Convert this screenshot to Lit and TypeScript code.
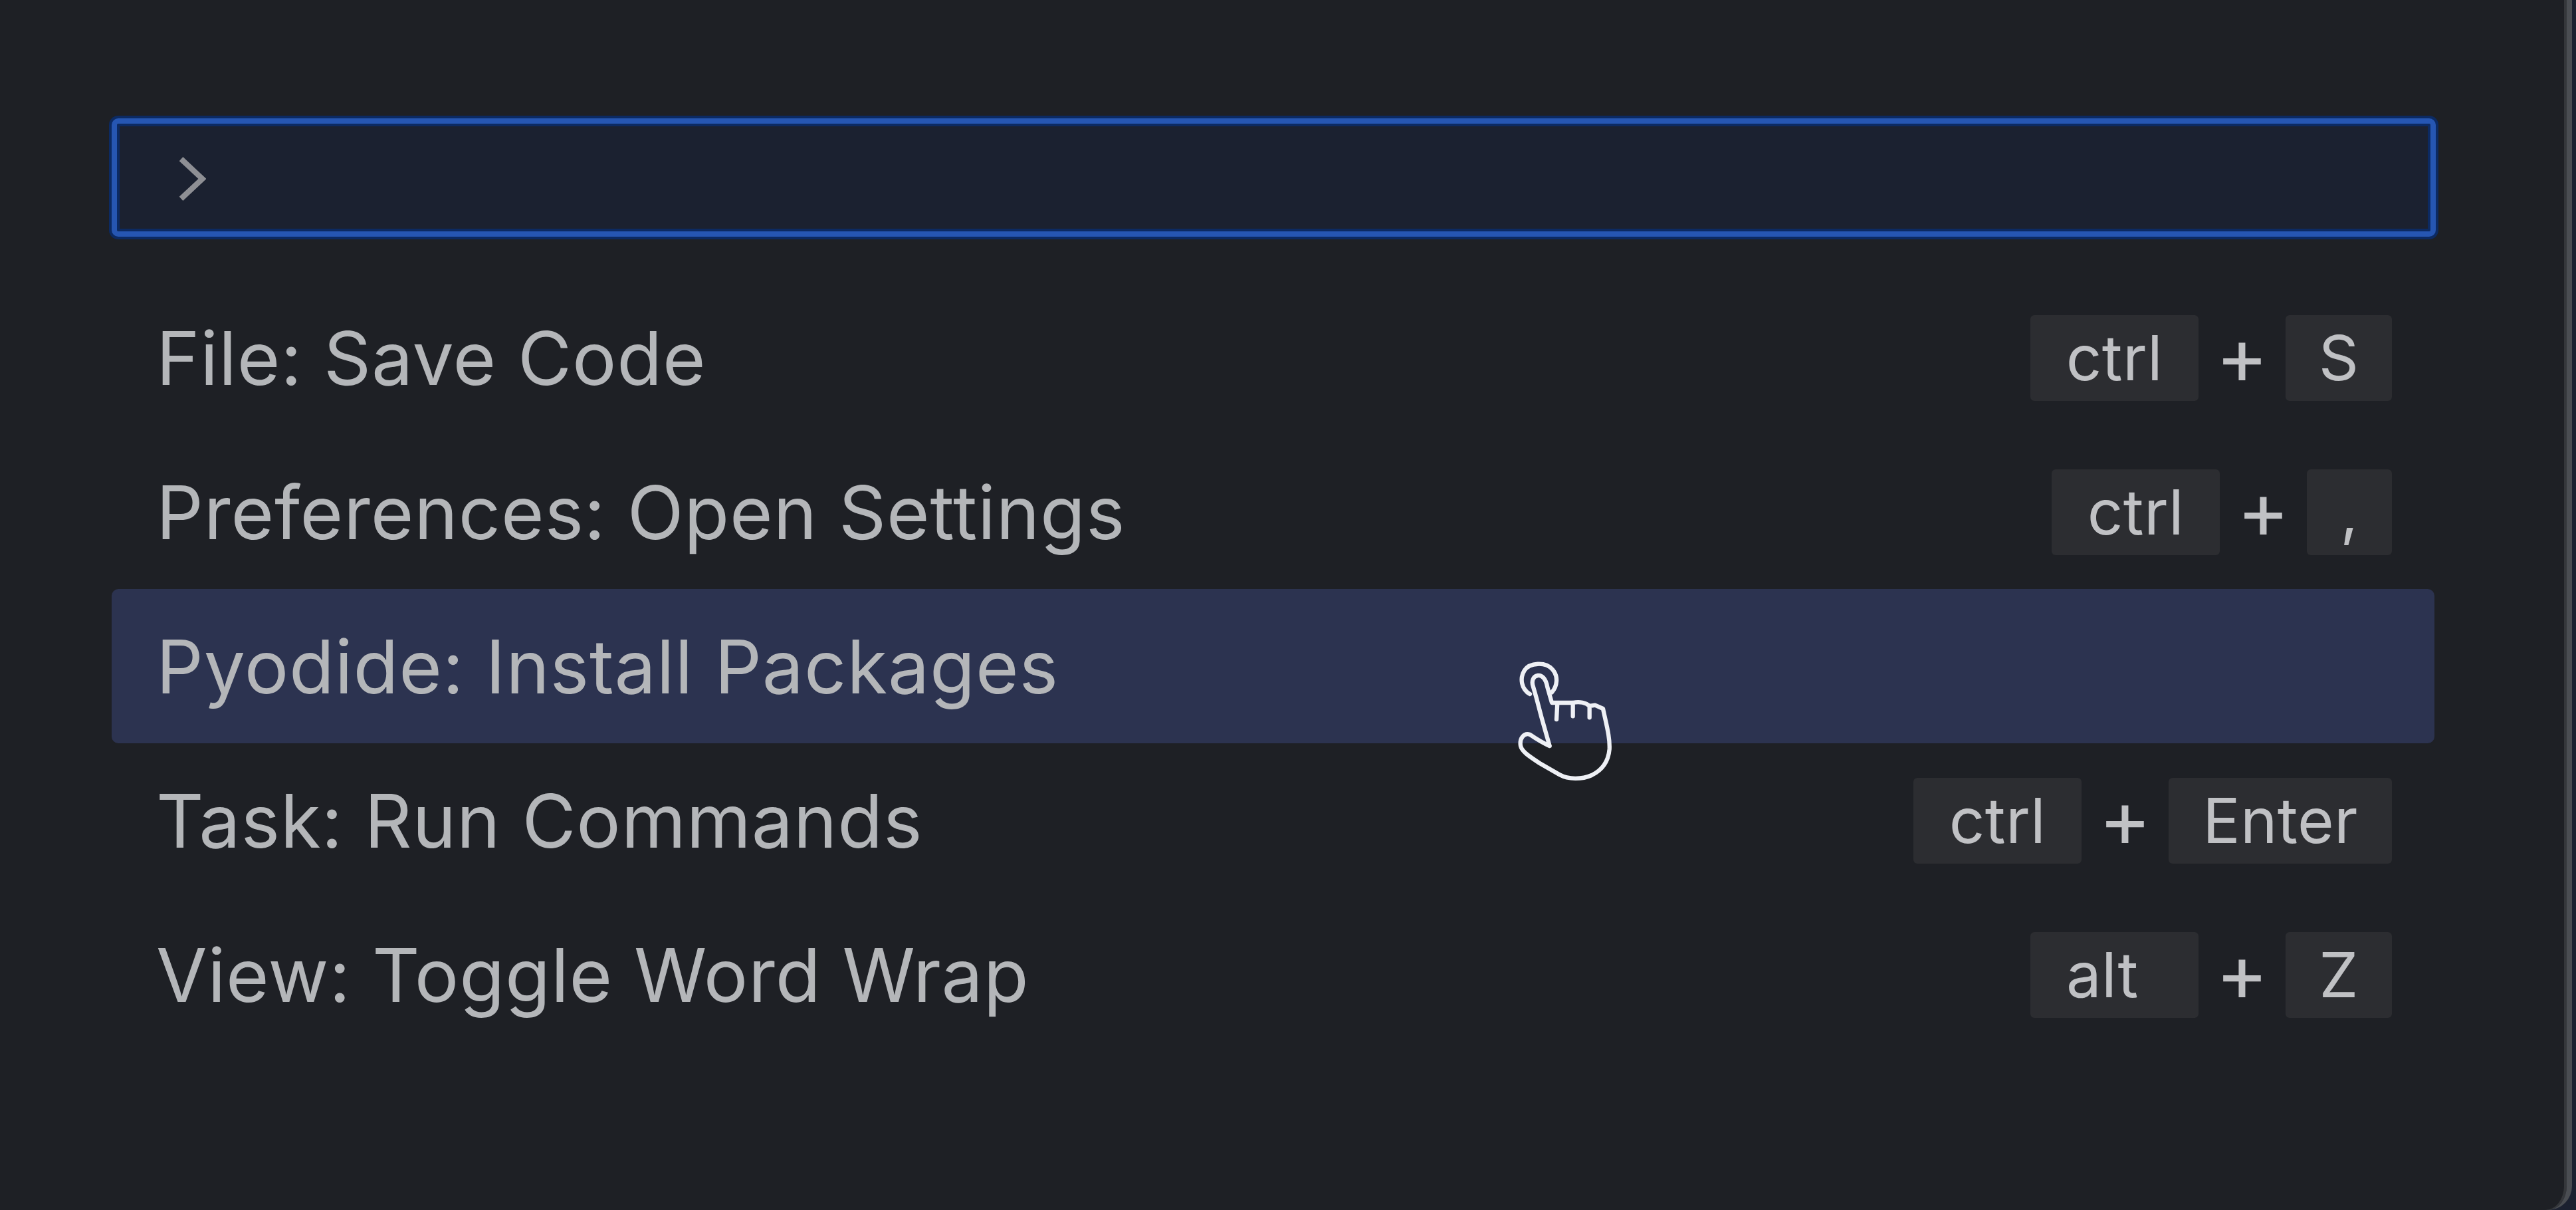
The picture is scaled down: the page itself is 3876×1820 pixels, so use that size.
import { LitElement, css, html, nothing } from "lit";
import { customElement } from "lit/decorators.js";

type Key = {
  text: string;
  width: number;
  start?: boolean;
};

type Command = {
  label: string;
  keys?: [Key, Key];
  active?: boolean;
};

const COMMANDS: Command[] = [
  {
    label: "File: Save Code",
    keys: [
      { text: "ctrl", width: 253 },
      { text: "S", width: 160 }
    ]
  },
  {
    label: "Preferences: Open Settings",
    keys: [
      { text: "ctrl", width: 253 },
      { text: ",", width: 128 }
    ]
  },
  { label: "Pyodide: Install Packages", active: true },
  {
    label: "Task: Run Commands",
    keys: [
      { text: "ctrl", width: 253 },
      { text: "Enter", width: 336 }
    ]
  },
  {
    label: "View: Toggle Word Wrap",
    keys: [
      { text: "alt", width: 253, start: true },
      { text: "Z", width: 160 }
    ]
  }
];

@customElement("app-root")
export class AppRoot extends LitElement {
  protected render() {
    return html`
      <div class="panel">
        <div class="prompt">
          <svg class="chevron" viewBox="0 0 40 66" aria-hidden="true">
            <path d="M4 4 L35 33 L4 62" />
          </svg>
        </div>
        <div class="list">
          ${COMMANDS.map((command) => this.renderRow(command))}
        </div>
      </div>
    `;
  }

  private renderRow(command: Command) {
    return html`
      <div class="row ${command.active ? "active" : ""}">
        <span class="label">${command.label}</span>
        ${command.keys
          ? html`
              <span class="keys">
                ${this.renderKey(command.keys[0])}
                <span class="plus">+</span>
                ${this.renderKey(command.keys[1])}
              </span>
            `
          : nothing}
        ${command.active ? this.renderHand() : nothing}
      </div>
    `;
  }

  private renderKey(key: Key) {
    return html`<span class="key ${key.start ? "start" : ""}" style="width: ${key.width}px">${key.text}</span>`;
  }

  private renderHand() {
    return html`
      <svg class="hand" viewBox="0 0 780 690" aria-hidden="true">
        <path
          d="M306 246 C268 225 258 175 282 138 C305 105 375 98 408 135 C435 165 430 210 405 238"
        />
        <path
          d="M395 480 C360 465 330 445 305 428 C280 420 258 445 264 480 C270 505 300 525 350 558 L440 610 C480 632 540 632 585 612 C630 590 660 550 665 495 C668 440 650 380 636 312 L600 296 L575 300 L575 352 M575 300 C560 285 530 278 500 285 L500 346 M500 285 L430 285 L426 360 M430 285 L405 285 L385 215 C378 175 360 160 342 162 C322 165 312 185 320 210 L335 262 L358 350 L395 480"
        />
      </svg>
    `;
  }

  static styles = css`
    :host {
      display: block;
      width: 3876px;
      height: 1820px;
      background: #1b2130;
      font-family: Inter, "Noto Sans", sans-serif;
    }

    .panel {
      box-sizing: border-box;
      width: 3870px;
      height: 1820px;
      padding: 178px 197px 0 168px;
      background: #1e2025;
      border-right: 8px solid #4a4d52;
      border-bottom-right-radius: 36px;
      box-shadow: inset -4px 0 0 #35373b;
    }

    .prompt {
      box-sizing: border-box;
      display: flex;
      align-items: center;
      height: 178px;
      padding-left: 92px;
      background: #1b2130;
      border: 8px solid #2656b2;
      border-radius: 10px;
      box-shadow: 0 0 0 4px #0c2a62, inset 0 0 0 4px #0c2a62;
    }

    .chevron {
      width: 42px;
      height: 68px;
      margin-top: 4px;
      fill: none;
      stroke: #8e8f94;
      stroke-width: 8;
    }

    .list {
      display: flex;
      flex-direction: column;
      width: 3495px;
      margin-top: 66px;
    }

    .row {
      position: relative;
      display: flex;
      align-items: center;
      justify-content: space-between;
      box-sizing: border-box;
      height: 232px;
      padding: 0 64px 0 67px;
      border-radius: 10px;
      color: #b4b6b9;
      font-size: 111px;
      letter-spacing: 0.8px;
    }

    .row.active {
      background: #2c3350;
    }

    .keys {
      display: flex;
      align-items: center;
      color: #c0c1c4;
      font-size: 94px;
      letter-spacing: 0.3px;
    }

    .key {
      box-sizing: border-box;
      display: flex;
      align-items: center;
      justify-content: center;
      height: 129px;
      background: #2c2d31;
      border-radius: 6px;
    }

    .key.start {
      justify-content: flex-start;
      padding-left: 54px;
    }

    .plus {
      width: 131px;
      padding-bottom: 8px;
      text-align: center;
      font-size: 120px;
      line-height: 121px;
    }

    .hand {
      position: absolute;
      top: 76px;
      left: 2032px;
      width: 260px;
      height: 230px;
      fill: none;
      stroke: #eef0f5;
      stroke-width: 19;
      stroke-linejoin: round;
      stroke-linecap: round;
    }
  `;
}

declare global {
  interface HTMLElementTagNameMap {
    "app-root": AppRoot;
  }
}
